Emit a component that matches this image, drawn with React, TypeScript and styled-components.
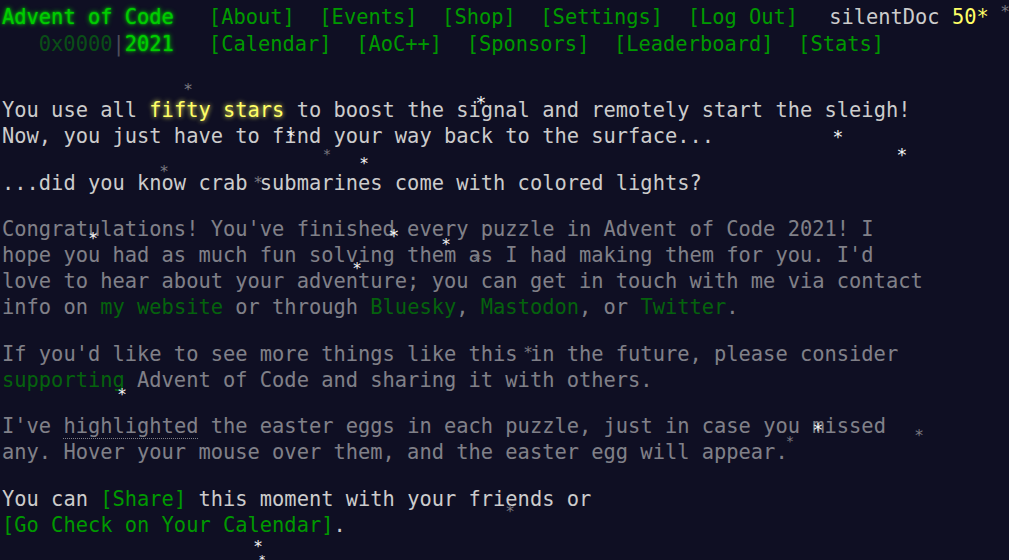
import React from "react";
import styled, { createGlobalStyle } from "styled-components";

const GlobalStyle = createGlobalStyle`
  html, body {
    margin: 0;
    padding: 0;
    background: #0f0f23;
  }
  body {
    color: #cccccc;
    font-family: "DejaVu Sans Mono", "Liberation Mono", monospace;
    font-size: 20.4px;
    overflow: hidden;
  }
`;

const Page = styled.div`
  position: relative;
  width: 1009px;
  height: 560px;
  overflow: hidden;
  padding-left: 2px;
  box-sizing: border-box;
`;

const Header = styled.header`
  display: flex;
  flex-direction: column;
  padding-top: 3px;
`;

const HeaderRow = styled.div`
  display: flex;
  align-items: center;
  height: 27px;
  white-space: pre;
`;

const TitleCell = styled.div<{ $align: "left" | "right" }>`
  width: 14ch;
  text-align: ${(p) => p.$align};
`;

const Title = styled.a`
  color: #00cc00;
  text-decoration: none;
  text-shadow: 0 0 2px #00cc00, 0 0 5px #00cc00;
`;

const EventWrap = styled.span`
  opacity: 0.33;
  color: #cccccc;
`;

const EventHex = styled.span`
  color: #00cc00;
`;

const Nav = styled.nav`
  display: flex;
  gap: 2ch;
  margin-left: 35px;
`;

const NavLink = styled.a`
  color: #009900;
  text-decoration: none;
`;

const User = styled.div`
  margin-left: 31px;
  color: #cccccc;
`;

const StarCount = styled.span`
  color: #ffff66;
`;

const Main = styled.main`
  display: flex;
  flex-direction: column;
  gap: 20.5px;
  padding-top: 40px;
  width: 75ch;
`;

const Para = styled.p<{ $faded?: boolean }>`
  margin: 0;
  line-height: 26px;
  opacity: ${(p) => (p.$faded ? 0.6 : 1)};
`;

const Glow = styled.em`
  font-style: normal;
  color: #ffff66;
  text-shadow: 0 0 5px #ffff66;
`;

const Link = styled.a<{ $nowrap?: boolean }>`
  color: #009900;
  text-decoration: none;
  white-space: ${(p) => (p.$nowrap ? "nowrap" : "normal")};
`;

const Egg = styled.span`
  border-bottom: 1px dotted #cccccc;
`;

const Star = styled.span<{ $bright: boolean; $size: number }>`
  position: absolute;
  line-height: 1;
  font-size: ${(p) => p.$size}px;
  color: ${(p) => (p.$bright ? "#f4f4f4" : "#77777f")};
  pointer-events: none;
`;

const stars: Array<[number, number, boolean, number]> = [
  [188, 88, false, 16],
  [481, 101, true, 18],
  [291, 135, true, 16],
  [838, 135, true, 18],
  [327, 153, false, 14],
  [364, 162, true, 16],
  [902, 153, true, 18],
  [164, 170, false, 16],
  [258, 181, false, 16],
  [93, 237, true, 16],
  [394, 234, true, 18],
  [446, 243, true, 16],
  [477, 258, false, 14],
  [357, 267, true, 16],
  [528, 351, false, 16],
  [122, 393, true, 16],
  [818, 428, true, 18],
  [790, 440, false, 14],
  [919, 434, false, 16],
  [510, 510, false, 16],
  [258, 545, true, 16],
  [1005, 10, false, 16],
  [262, 559, true, 12],
];

export default function App() {
  return (
    <Page>
      <GlobalStyle />
      <Header>
        <HeaderRow>
          <TitleCell $align="left">
            <Title href="#">Advent of Code</Title>
          </TitleCell>
          <Nav>
            <NavLink href="#">[About]</NavLink>
            <NavLink href="#">[Events]</NavLink>
            <NavLink href="#">[Shop]</NavLink>
            <NavLink href="#">[Settings]</NavLink>
            <NavLink href="#">[Log Out]</NavLink>
          </Nav>
          <User>
            silentDoc <StarCount>50*</StarCount>
          </User>
        </HeaderRow>
        <HeaderRow>
          <TitleCell $align="right">
            <EventWrap>
              <EventHex>0x0000</EventHex>|
            </EventWrap>
            <Title href="#">2021</Title>
          </TitleCell>
          <Nav>
            <NavLink href="#">[Calendar]</NavLink>
            <NavLink href="#">[AoC++]</NavLink>
            <NavLink href="#">[Sponsors]</NavLink>
            <NavLink href="#">[Leaderboard]</NavLink>
            <NavLink href="#">[Stats]</NavLink>
          </Nav>
        </HeaderRow>
      </Header>
      <Main>
        <Para>
          You use all <Glow>fifty stars</Glow> to boost the signal and remotely
          start the sleigh! Now, you just have to find your way back to the
          surface...
        </Para>
        <Para>...did you know crab submarines come with colored lights?</Para>
        <Para $faded>
          Congratulations! You've finished every puzzle in Advent of Code 2021!
          I hope you had as much fun solving them as I had making them for you.
          I'd love to hear about your adventure; you can get in touch with me
          via contact info on <Link href="#">my website</Link> or through{" "}
          <Link href="#">Bluesky</Link>, <Link href="#">Mastodon</Link>, or{" "}
          <Link href="#">Twitter</Link>.
        </Para>
        <Para $faded>
          If you'd like to see more things like this in the future, please
          consider <Link href="#">supporting</Link> Advent of Code and sharing
          it with others.
        </Para>
        <Para $faded>
          I've <Egg>highlighted</Egg> the easter eggs in each puzzle, just in
          case you missed any. Hover your mouse over them, and the easter egg
          will appear.
        </Para>
        <Para>
          You can <Link href="#">[Share]</Link> this moment with your friends or{" "}
          <Link href="#" $nowrap>
            [Go Check on Your Calendar]
          </Link>
          .
        </Para>
      </Main>
      {stars.map(([x, y, bright, size], i) => (
        <Star
          key={i}
          $bright={bright}
          $size={size}
          style={{ left: x - size * 0.3, top: y - size * 0.4 }}
        >
          *
        </Star>
      ))}
    </Page>
  );
}
